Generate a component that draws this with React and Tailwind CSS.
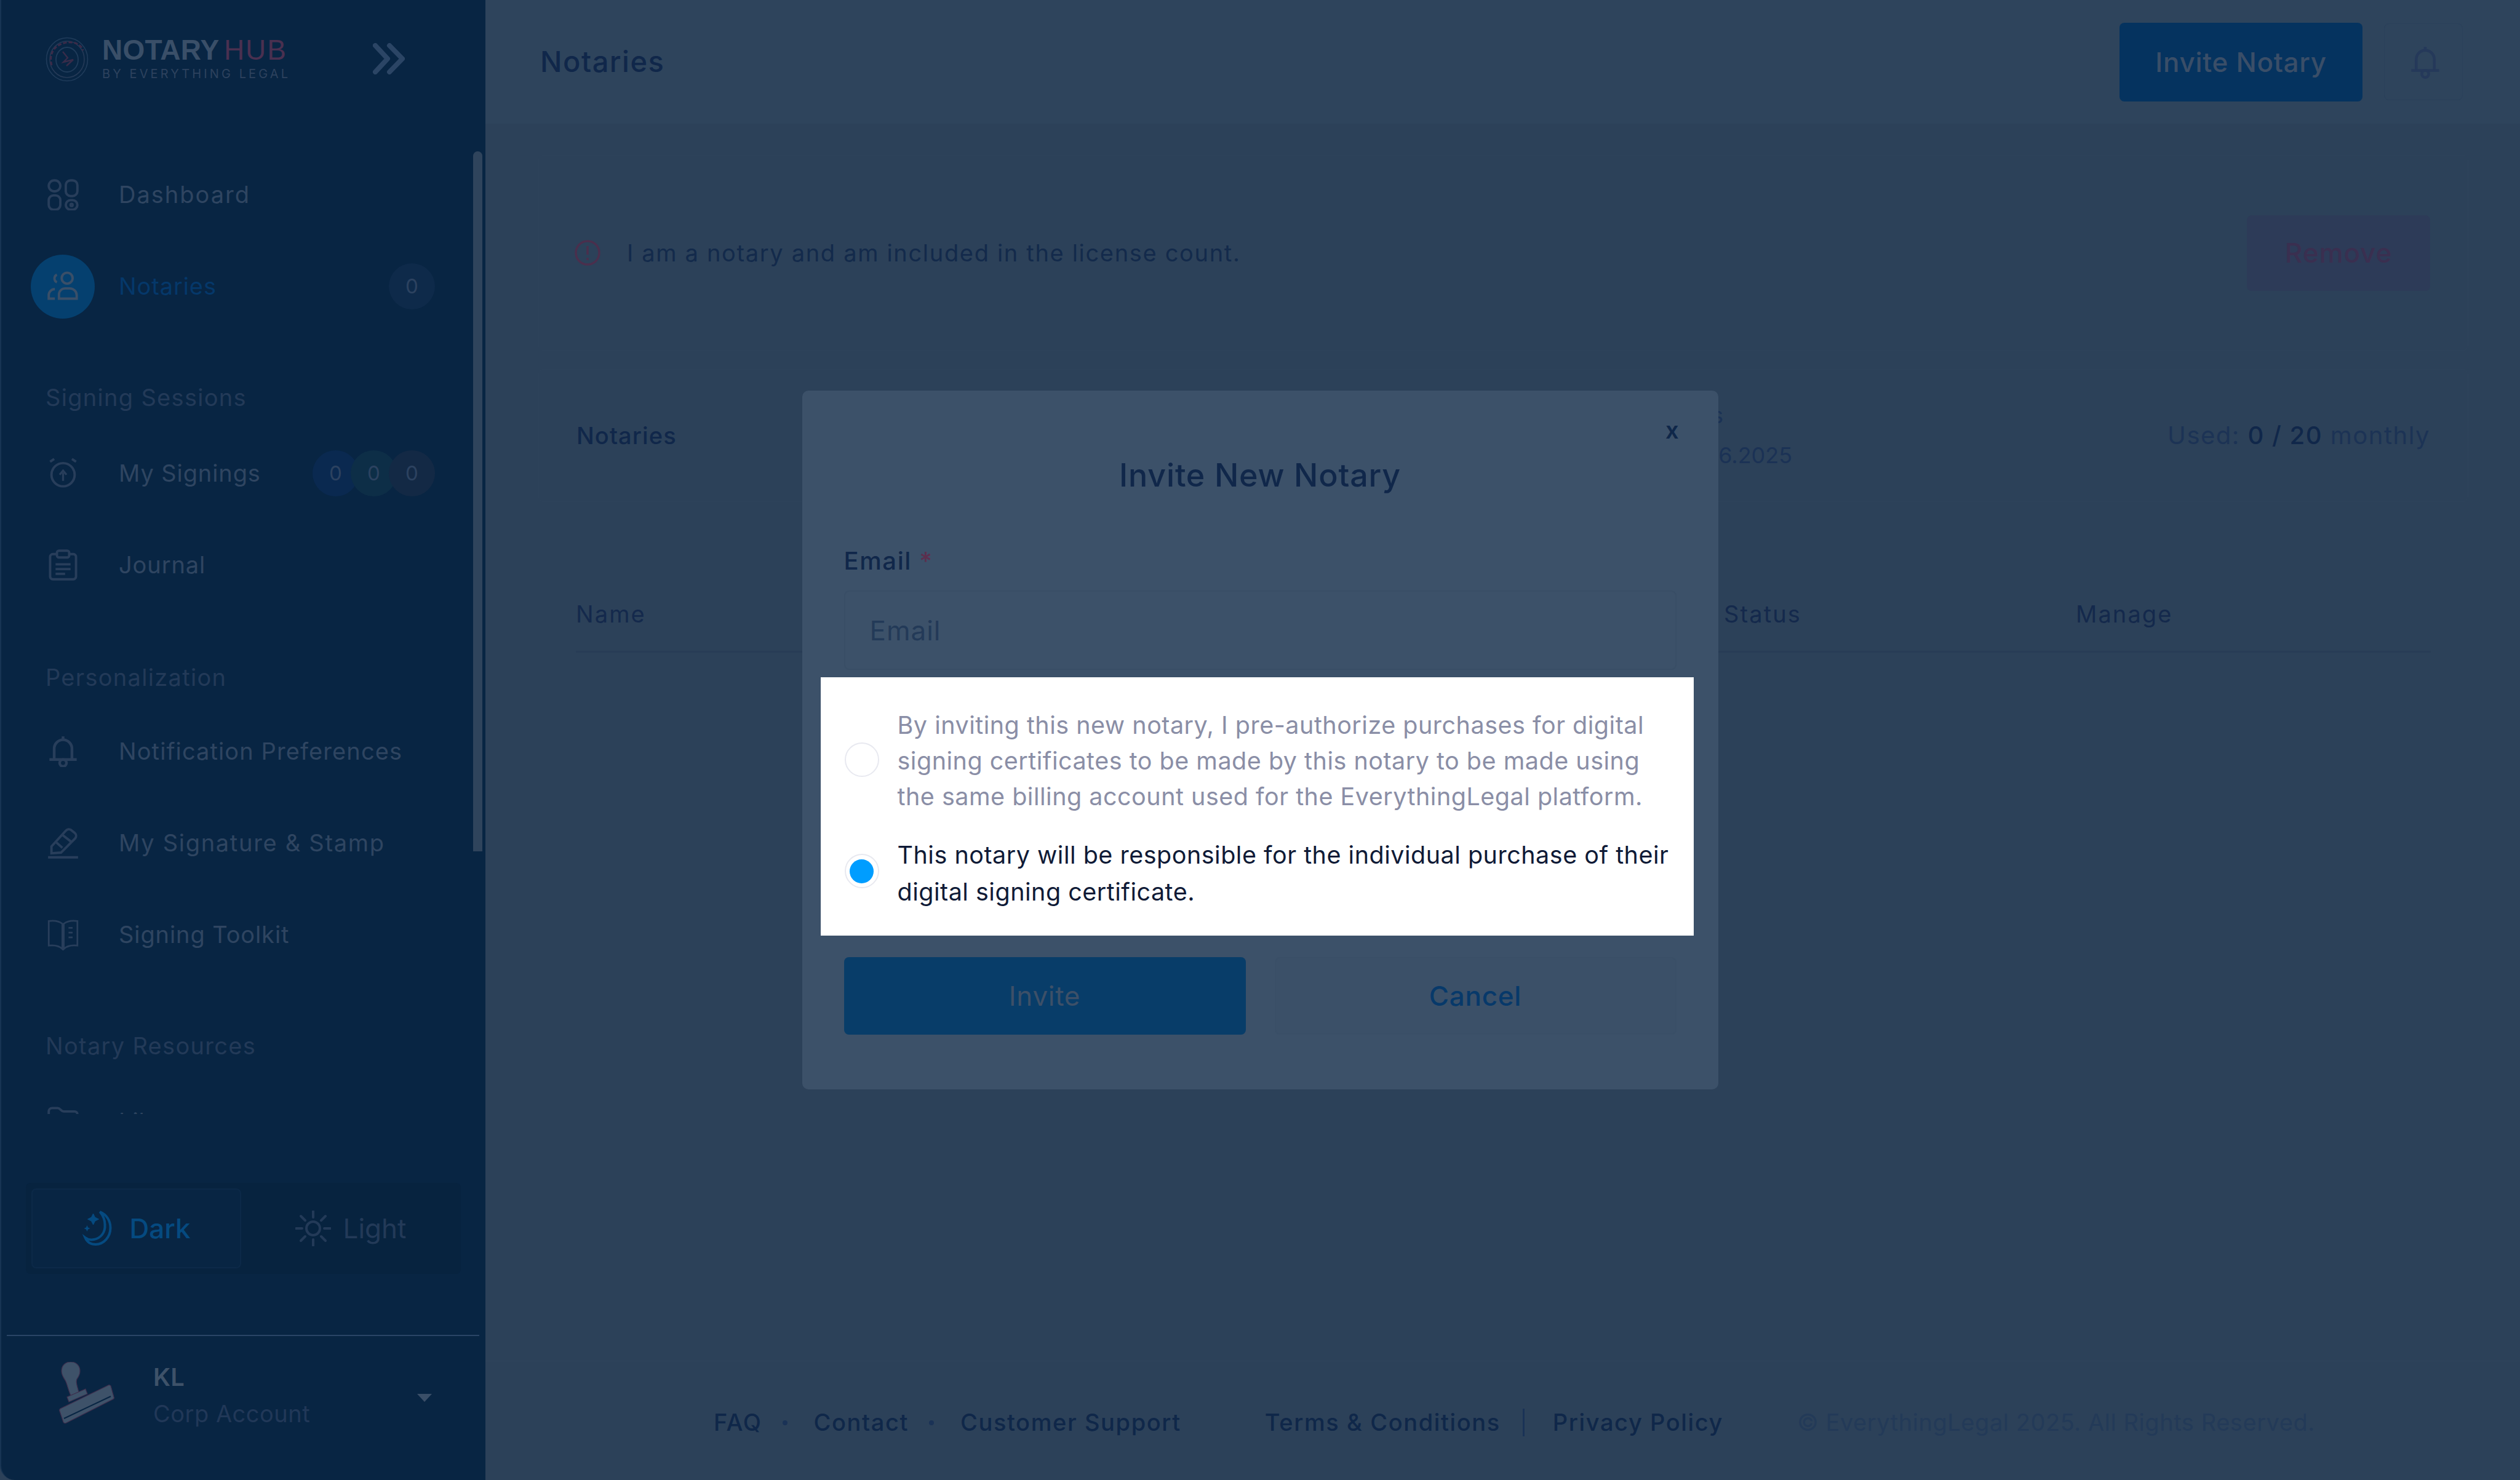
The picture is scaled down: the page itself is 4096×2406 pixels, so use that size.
import React from 'react';

const ICON = 'shrink-0 fill-none stroke-current';

const DashboardIcon = () => (
  <svg viewBox="0 0 46 46" className={`${ICON} h-[51px] w-[51px]`} strokeWidth="3.5">
    <rect x="2" y="2" width="17" height="16" rx="8" />
    <rect x="27" y="2" width="17" height="23" rx="7" />
    <rect x="2" y="24" width="17" height="21" rx="7" />
    <rect x="27" y="31" width="17" height="14" rx="7" />
    <circle cx="35.5" cy="38" r="1.5" />
  </svg>
);

const UsersIcon = () => (
  <svg viewBox="0 0 46 46" className={`${ICON} h-[51px] w-[51px]`} strokeWidth="3.5">
    <circle cx="29" cy="11" r="8" />
    <path d="M14 6a6 6 0 0 0 0 11" />
    <path d="M17 41v-6a9 9 0 0 1 9-9h7a10 10 0 0 1 10 10v5z" />
    <path d="M11 41H2v-5a9 9 0 0 1 9-9" />
  </svg>
);

const AlarmIcon = () => (
  <svg viewBox="0 0 46 46" className={`${ICON} h-[51px] w-[51px]`} strokeWidth="3.5">
    <circle cx="23" cy="25" r="17" />
    <path d="M4 6l6-4M42 6l-6-4" />
    <path d="M23 34V22M18 25l5-6 5 6" strokeWidth="3" />
  </svg>
);

const ClipboardIcon = () => (
  <svg viewBox="0 0 46 46" className={`${ICON} h-[51px] w-[51px]`} strokeWidth="3.5">
    <path d="M14 7H8a4 4 0 0 0-4 4v29a4 4 0 0 0 4 4h30a4 4 0 0 0 4-4V11a4 4 0 0 0-4-4h-6" />
    <rect x="14" y="2" width="18" height="10" rx="3" />
    <path d="M12 22h22M12 29h22M12 36h14" />
  </svg>
);

const BellIcon = ({ className = 'h-[51px] w-[51px]' }) => (
  <svg viewBox="0 0 46 46" className={`${ICON} ${className}`} strokeWidth="4">
    <path d="M23 1v5" />
    <path d="M10 34V19a13 13 0 0 1 26 0v15" />
    <path d="M3 35h40" />
    <circle cx="23" cy="40" r="5" />
  </svg>
);

const PenIcon = () => (
  <svg viewBox="0 0 46 46" className={`${ICON} h-[51px] w-[51px]`} strokeWidth="3.5">
    <path d="M6 28L27 5a6 6 0 0 1 8-1l5 4a6 6 0 0 1 1 8L20 37l-14 1z" />
    <path d="M22 11l14 11M13 22l9 8" />
    <path d="M1 44h44" />
  </svg>
);

const BookIcon = () => (
  <svg viewBox="0 0 46 46" className={`${ICON} h-[51px] w-[51px]`} strokeWidth="2.5">
    <path d="M22 7c-5-4-12-5-20-4v36c8-1 15 0 20 5V7zM24 7c5-4 12-5 20-4v36c-8-1-15 0-20 5V7z" />
    <path d="M31 13h6M31 20h6M31 27h6" />
  </svg>
);

const FolderIcon = () => (
  <svg viewBox="0 0 46 46" className={`${ICON} h-[51px] w-[51px]`} strokeWidth="3.5">
    <path d="M2 14V8a5 5 0 0 1 5-5h8c4 0 5 5 9 5h16a4 4 0 0 1 4 4v28H2z" />
  </svg>
);

const ChevronsIcon = () => (
  <svg viewBox="0 0 52 51" className={`${ICON} h-[51px] w-[52px]`} strokeWidth="8" strokeLinecap="round" strokeLinejoin="round">
    <path d="M4 4l20 21.5L4 47" />
    <path d="M27 4l21 21.5L27 47" />
  </svg>
);

const LogoSeal = () => (
  <svg viewBox="0 0 70 73" className="h-[73px] w-[70px] shrink-0 fill-none">
    <ellipse cx="35" cy="36.5" rx="33.5" ry="35" stroke="#203c5b" strokeWidth="1.6" />
    <ellipse cx="35" cy="36.5" rx="28" ry="29.5" stroke="#253a57" strokeWidth="1.6" />
    <path d="M10 46C5 28 14 14 30 10s28 2 31 12" stroke="#3c2b49" strokeWidth="3" strokeDasharray="6 3" />
    <ellipse cx="35" cy="37" rx="18" ry="20" stroke="#203c5b" strokeWidth="1.8" />
    <path d="M28 24l8 10-7 7 16-4-11 10" stroke="#382c4a" strokeWidth="2.4" />
  </svg>
);

const MoonIcon = () => (
  <svg viewBox="0 0 46 58" className="h-[58px] w-[53px] shrink-0 fill-none stroke-[#054a80]">
    <path d="M26 2c10 4 17 14 17 26 0 15-11 27-24 27-8 0-14-4-17-11 4 3 9 4 14 3 11-2 19-11 18-24 0-8-3-15-8-21z" strokeWidth="4" />
    <path d="M15 5l3 6 6 3-6 3-3 6-3-6-6-3 6-3z" fill="#054a80" strokeWidth="1" />
    <path d="M5 24l1.6 3.4L10 29l-3.4 1.6L5 34l-1.6-3.4L0 29l3.400-1.600z" fill="#054a80" strokeWidth="0" />
  </svg>
);

const SunIcon = () => (
  <svg viewBox="0 0 58 58" className={`${ICON} h-[58px] w-[58px]`} strokeWidth="4" strokeLinecap="round">
    <circle cx="29" cy="29" r="11" />
    <path d="M29 1v10M29 47v10M1 29h10M47 29h10M9 9l7 7M42 42l7 7M49 9l-7 7M16 42l-7 7" />
  </svg>
);

const StampIcon = () => (
  <svg viewBox="0 0 90 103" className="h-[103px] w-[90px] shrink-0" stroke="#3f2f4e" strokeWidth="1.2">
    <path d="M19 0c9 0 15 6 15 15 0 6-3 10-5 13-2 4 0 10 3 21l-13 6c-5-12-6-20-9-25C7 25 4 21 4 15 4 6 10 0 19 0z" fill="#3e5269" />
    <path d="M13 57l30-13 3 8-30 13z" fill="#3e5269" />
    <path d="M2 76l78-38c2-1 3 0 4 1l5 18c1 2 0 3-2 4L12 99c-2 1-4 1-5-1L1 80c-1-2 0-3 1-4z" fill="#3e5269" />
    <path d="M8 92l76-36" stroke="#082543" strokeWidth="2" />
  </svg>
);

const AlertIcon = () => (
  <svg viewBox="0 0 44 44" className="h-[44px] w-[44px] shrink-0 fill-none stroke-[#4a2f4d]" strokeWidth="3.500">
    <circle cx="22" cy="22" r="19" />
    <path d="M22 11v14M22 30v4" />
  </svg>
);

const Row = ({ icon, label, active, badges, tracking = 'tracking-[0.9px]' }) => (
  <div className="flex h-[149px] items-center pr-[82px]">
    <div className="flex w-[191px] shrink-0 justify-center pr-[7px] pl-[16px]">
      {active ? (
        <span className="flex h-[104px] w-[104px] items-center justify-center rounded-full bg-[#05406f] text-[#3a4f68]">{icon}</span>
      ) : (
        <span className="text-[#283e5b]">{icon}</span>
      )}
    </div>
    <span className={`text-[38px] ${tracking} ${active ? 'text-[#05386a]' : 'text-[#2f4561]'}`}>{label}</span>
    {badges && (
      <div className="ml-auto flex">
        {badges.map((color, i) => (
          <span key={i} className={`flex h-[75px] w-[75px] items-center justify-center rounded-full text-[33px] text-[#2c4260] ${i > 0 ? '-ml-[13px]' : ''} ${color}`}>
            0
          </span>
        ))}
      </div>
    )}
  </div>
);

const Section = ({ label, className }) => (
  <div className={`flex items-end pl-[72px] text-[38px] leading-[57px] tracking-[1.3px] text-[#233a58] ${className}`}>{label}</div>
);

const Sidebar = () => (
  <aside className="flex h-[2406px] w-[789px] shrink-0 flex-col overflow-hidden rounded-bl-[24px] border-l-[2px] border-[#173453] bg-[#082543]">
    <div className="flex h-[201px] shrink-0 items-start pt-[60px] pl-[72px]">
      <LogoSeal />
      <div className="ml-[22px] flex w-[301px] flex-col">
        <div className="flex h-[43px] items-center justify-between text-[46px] font-semibold [font-family:'Liberation_Sans',sans-serif]">
          <span className="tracking-[0.2px] text-[#3a4f68]">NOTARY</span>
          <span className="font-normal tracking-[2px] text-[#4a3050]">HUB</span>
        </div>
        <div className="mt-[7px] text-[20px] leading-[20px] tracking-[4.1px] whitespace-nowrap text-[#2d425e]">BY EVERYTHING LEGAL</div>
      </div>
      <div className="mt-[10px] ml-[139px] text-[#2b4565]">
        <ChevronsIcon />
      </div>
    </div>

    <div className="relative h-[1610px] shrink-0 overflow-hidden pt-[41px]">
      <div className="absolute top-[45px] right-[5px] h-[1138px] w-[15px] rounded-t-full bg-[#2f445c]" />
      <Row icon={<DashboardIcon />} label="Dashboard" tracking="tracking-[2px]" />
      <Row icon={<UsersIcon />} label="Notaries" active badges={['bg-[#0e2a4a]']} />
      <Section label="Signing Sessions" className="h-[155px] pb-[20px]" />
      <Row icon={<AlarmIcon />} label="My Signings" badges={['bg-[#0a2950]', 'bg-[#0d2e47]', 'bg-[#132945]']} />
      <Row icon={<ClipboardIcon />} label="Journal" />
      <Section label="Personalization" className="h-[154px] pb-[17px]" />
      <Row icon={<BellIcon />} label="Notification Preferences" tracking="tracking-[1.1px]" />
      <Row icon={<PenIcon />} label="My Signature & Stamp" tracking="tracking-[1.7px]" />
      <Row icon={<BookIcon />} label="Signing Toolkit" />
      <Section label="Notary Resources" className="h-[155px] pb-[20px]" />
      <Row icon={<FolderIcon />} label="Library" />
    </div>

    <div className="mt-[112px] ml-[40px] flex h-[148px] w-[707px] shrink-0 rounded-[8px] bg-[#07233f] p-[9px]">
      <div className="flex h-[130px] w-[341px] items-center justify-center gap-[24px] rounded-[8px] border-[2px] border-[#0c2948] bg-[#082543] text-[44px] font-medium text-[#054a80]">
        <MoonIcon />
        Dark
      </div>
      <div className="flex flex-1 items-center justify-center gap-[20px] pl-[8px] text-[44px] text-[#233a58]">
        <SunIcon />
        Light
      </div>
    </div>

    <div className="mt-[99px] ml-[9px] h-[2px] w-[768px] shrink-0 bg-[#2a4566]" />

    <div className="flex flex-1 items-start pt-[42px] pl-[94px]">
      <StampIcon />
      <div className="ml-[63px] flex w-[302px] flex-col">
        <span className="text-[40px] leading-[50px] font-semibold text-[#3e5269]">KL</span>
        <span className="mt-[11px] text-[38px] leading-[46px] tracking-[0.5px] text-[#213858]">Corp Account</span>
      </div>
      <div className="mt-[52px] ml-[127px] h-0 w-0 border-x-[12px] border-t-[13px] border-x-transparent border-t-[#3a4f68]" />
    </div>
  </aside>
);

const Main = () => (
  <main className="flex min-w-0 flex-1 flex-col bg-[#2c4159]">
    <header className="flex h-[201px] shrink-0 items-center bg-[#2e445c] pr-[93px] pl-[89px]">
      <h1 className="text-[47px] font-medium tracking-[1.5px] text-[#10274a]">Notaries</h1>
      <button className="ml-auto flex h-[128px] w-[395px] items-center justify-center rounded-[8px] bg-[#05335f] text-[44px] font-medium tracking-[0.7px] text-[#3a4e68]">
        Invite Notary
      </button>
      <div className="ml-[35px] flex h-[125px] w-[128px] items-center justify-center rounded-[8px] border-[1.5px] border-[#2a405a] pl-[5px] text-[#25395a]">
        <BellIcon className="h-[58px] w-[52px]" />
      </div>
    </header>

    <div className="mt-[51px] ml-[86px] flex h-[318px] w-[3137px] shrink-0 items-center rounded-[8px] border-[1.5px] border-[#2e435b] px-[61px]">
      <div className="ml-[-4px] flex items-center">
        <AlertIcon />
        <span className="ml-[42px] text-[38px] tracking-[1.67px] text-[#132a4b]">I am a notary and am included in the license count.</span>
      </div>
      <button className="ml-auto flex h-[123px] w-[298px] items-center justify-center rounded-[8px] bg-[#2d3b58] text-[44px] font-medium tracking-[0.9px] text-[#3a2f50]">
        Remove
      </button>
    </div>

    <div className="mt-[30px] ml-[86px] flex h-[216px] w-[3137px] shrink-0 items-center rounded-[8px] border-[1.5px] border-[#2e435b] px-[61px]">
      <span className="w-[1780px] shrink-0 text-[38px] font-medium tracking-[1.1px] text-[#10274a]">Notaries</span>
      <div className="flex flex-col text-[36px] leading-[65px] text-[#1b3255]">
        <span>Ends</span>
        <span>06.26.2025</span>
      </div>
      <span className="ml-auto text-[40px] tracking-[1.5px] text-[#1c3355]">
        Used: <span className="font-medium text-[#10274a]">0 / 20</span> monthly
      </span>
    </div>

    <div className="mt-[34px] ml-[86px] w-[3137px] shrink-0 px-[61px]">
      <div className="flex h-[211px] items-end border-b-[3px] border-[#283c56] pb-[31px] text-[38px] tracking-[2.1px] text-[#14294c]">
        <span className="w-[1866px]">Name</span>
        <span className="w-[572px]">Status</span>
        <span>Manage</span>
      </div>
    </div>

    <footer className="mt-auto flex h-[194px] shrink-0 items-center border-t-[1.5px] border-[#2e435b] pt-[6px] pl-[371px] text-[38px] font-medium tracking-[1.6px] text-[#0f2749]">
      <span>FAQ</span>
      <span className="mr-[43px] ml-[33px] h-[8px] w-[8px] rounded-full bg-[#1a3256]" />
      <span>Contact</span>
      <span className="mr-[43px] ml-[33px] h-[8px] w-[8px] rounded-full bg-[#1a3256]" />
      <span>Customer Support</span>
      <span className="ml-[136px]">Terms &amp; Conditions</span>
      <span className="mr-[46px] ml-[36px] h-[45px] w-[3px] bg-[#1a3256]" />
      <span>Privacy Policy</span>
      <span className="ml-[120px] font-normal tracking-[0.55px] text-[#233a58]">© EverythingLegal 2025. All Rights Reserved.</span>
    </footer>
  </main>
);

const Radio = ({ checked, className }) => (
  <span className={`flex h-[56px] w-[56px] shrink-0 items-center justify-center rounded-full border-[2px] border-[#e8e9f0] bg-white ${className}`}>
    {checked && <span className="h-[39px] w-[39px] rounded-full bg-[#009dff]" />}
  </span>
);

const InviteModal = () => (
  <div className="fixed inset-0 flex items-center justify-center">
    <div className="relative flex h-[1136px] w-[1489px] flex-col rounded-[10px] bg-[#3c5169] px-[68px] pt-[103px]">
      <span className="absolute top-[44px] right-[64px] text-[38px] leading-[40px] font-semibold text-[#0f2749]">x</span>
      <h2 className="text-center text-[52px] leading-[70px] font-medium tracking-[0.8px] text-[#10274a]">Invite New Notary</h2>
      <label className="mt-[75px] text-[40px] leading-[57px] font-medium tracking-[1.6px] text-[#10274a]">
        Email <span className="text-[#5c2f4e]">*</span>
      </label>
      <div className="mt-[20px] flex h-[129px] items-center rounded-[8px] border-[2px] border-[#394e66] pl-[40px] text-[44px] tracking-[1px] text-[#233a58]">Email</div>

      <div className="mt-[12px] mr-[-28px] ml-[-38px] flex h-[420px] shrink-0 flex-col gap-[36px] bg-white pt-[49px] pl-[39px]">
        <div className="flex items-center gap-[30px]">
          <Radio className="mb-[4px]" />
          <p className="text-[39.5px] leading-[58px] tracking-[0.5px] whitespace-nowrap text-[#8a8ea6]">
            By inviting this new notary, I pre-authorize purchases for digital
            <br />
            signing certificates to be made by this notary to be made using
            <br />
            the same billing account used for the EverythingLegal platform.
          </p>
        </div>
        <div className="flex items-center gap-[30px]">
          <Radio checked className="mb-[8px]" />
          <p className="text-[39.5px] leading-[60px] tracking-[0.5px] whitespace-nowrap text-[#0f1a36]">
            This notary will be responsible for the individual purchase of their
            <br />
            digital signing certificate.
          </p>
        </div>
      </div>

      <div className="mt-[35px] flex gap-[47px]">
        <button className="flex h-[126px] w-[653px] items-center justify-center rounded-[8px] bg-[#083d69] text-[44px] tracking-[0.7px] text-[#3d5068]">Invite</button>
        <button className="flex h-[126px] w-[653px] items-center justify-center rounded-[8px] border-[2px] border-[#3a4f67] bg-[#3b5068] text-[44px] font-medium tracking-[0.7px] text-[#07396a]">Cancel</button>
      </div>
    </div>
  </div>
);

export default function App() {
  return (
    <div className="flex h-[2406px] w-[4096px] overflow-hidden bg-[#2c4159] [font-family:Inter,sans-serif]">
      <Sidebar />
      <Main />
      <InviteModal />
    </div>
  );
}
